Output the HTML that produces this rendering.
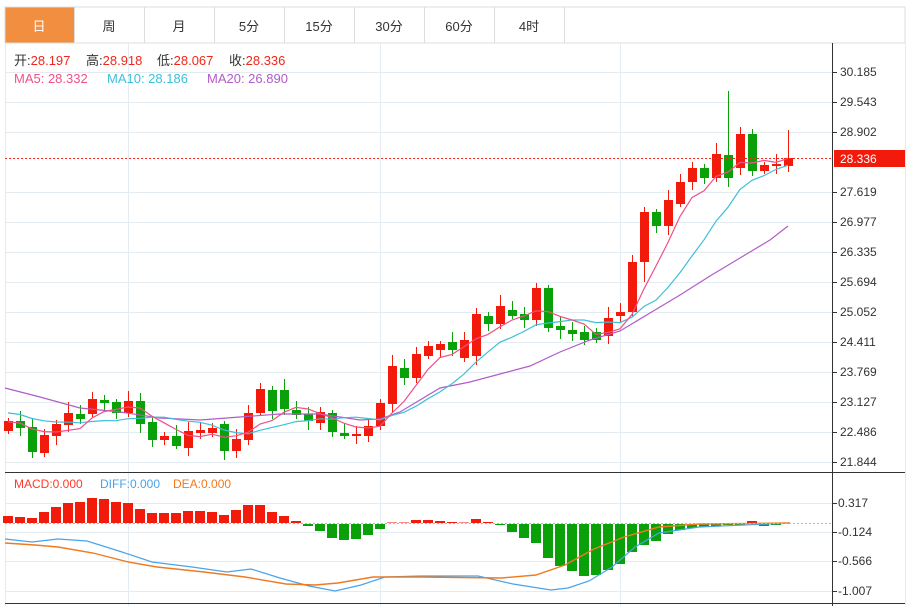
<!DOCTYPE html>
<html><head><meta charset="utf-8"><style>
body{margin:0;background:#fff;width:909px;height:606px;overflow:hidden;font-family:"Liberation Sans","Noto Sans CJK SC",sans-serif;}
svg{position:absolute;left:0;top:0}
</style></head><body>
<svg id="s" width="909" height="606" xmlns="http://www.w3.org/2000/svg" font-family="Liberation Sans, Noto Sans CJK SC, sans-serif">
<rect x="5" y="7" width="900" height="36" fill="#fff" stroke="#ddd"/>
<rect x="5.5" y="7.5" width="69" height="35" fill="#f28e3f"/>
<g stroke="#ddd"><line x1="74.5" y1="7" x2="74.5" y2="43"/><line x1="144.5" y1="7" x2="144.5" y2="43"/><line x1="214.5" y1="7" x2="214.5" y2="43"/><line x1="284.5" y1="7" x2="284.5" y2="43"/><line x1="354.5" y1="7" x2="354.5" y2="43"/><line x1="424.5" y1="7" x2="424.5" y2="43"/><line x1="494.5" y1="7" x2="494.5" y2="43"/><line x1="564.5" y1="7" x2="564.5" y2="43"/></g>
<g font-size="13" text-anchor="middle" fill="#333"><text x="39" y="31" fill="#fff">日</text><text x="109" y="31">周</text><text x="179" y="31">月</text><text x="249" y="31">5分</text><text x="319" y="31">15分</text><text x="389" y="31">30分</text><text x="459" y="31">60分</text><text x="529" y="31">4时</text></g>
<g id="grid" stroke="#e4ebf1" stroke-width="1"></g>
<g stroke="#e4ebf1"><line x1="128.5" y1="43" x2="128.5" y2="606"/><line x1="380.5" y1="43" x2="380.5" y2="606"/><line x1="620.5" y1="43" x2="620.5" y2="606"/><line x1="905.5" y1="43" x2="905.5" y2="606"/><line x1="5.5" y1="43" x2="5.5" y2="606"/></g>
<line x1="832.5" y1="43" x2="832.5" y2="606" stroke="#333"/>
<line x1="5" y1="472.5" x2="905" y2="472.5" stroke="#333"/>
<line x1="5" y1="603.5" x2="905" y2="603.5" stroke="#333"/>
<g font-size="13"><text x="14" y="65" fill="#333">开:<tspan fill="#f0271a">28.197</tspan></text><text x="86" y="65" fill="#333">高:<tspan fill="#f0271a">28.918</tspan></text><text x="157" y="65" fill="#333">低:<tspan fill="#f0271a">28.067</tspan></text><text x="229" y="65" fill="#333">收:<tspan fill="#f0271a">28.336</tspan></text>
<text x="14" y="83" fill="#f0508a">MA5: 28.332</text><text x="107" y="83" fill="#3cc0d8">MA10: 28.186</text><text x="207" y="83" fill="#b05cc8">MA20: 26.890</text></g>
<g font-size="12" fill="#ff3a2a"><text x="14" y="488">MACD:0.000</text><text x="100" y="488" fill="#4aa3e8">DIFF:0.000</text><text x="173" y="488" fill="#f07a20">DEA:0.000</text></g>
<g id="c"></g>
<line x1="5" y1="158.5" x2="832" y2="158.5" stroke="#f0271a" stroke-dasharray="2,2"/>
<rect x="834" y="150" width="71" height="17" fill="#f21a0a"/>
<text x="840" y="163" font-size="12" fill="#fff">28.336</text>
<line x1="5" y1="523.5" x2="832" y2="523.5" stroke="#8cc8dc" stroke-dasharray="2,2"/>
<g id="ax" font-size="12" fill="#333"></g>
</svg>
<script>
var NS="http://www.w3.org/2000/svg";
function el(p,t,a){var e=document.createElementNS(NS,t);for(var k in a)e.setAttribute(k,a[k]);document.getElementById(p).appendChild(e);return e;}
var labs=[[72,"30.185"],[102,"29.543"],[132,"28.902"],[192,"27.619"],[222,"26.977"],[252,"26.335"],[282,"25.694"],[312,"25.052"],[342,"24.411"],[372,"23.769"],[402,"23.127"],[432,"22.486"],[462,"21.844"]];
labs.forEach(function(l){el("grid","line",{x1:5,x2:832,y1:l[0]+.5,y2:l[0]+.5});el("grid","line",{x1:832,x2:837,y1:l[0]+.5,y2:l[0]+.5,stroke:"#333"});var t=el("ax","text",{x:840,y:l[0]+4});t.textContent=l[1];});
var ml=[[503,"0.317"],[532,"-0.124"],[561,"-0.566"],[591,"-1.007"]];
ml.forEach(function(l){el("grid","line",{x1:5,x2:832,y1:l[0]+.5,y2:l[0]+.5});el("grid","line",{x1:832,x2:837,y1:l[0]+.5,y2:l[0]+.5,stroke:"#333"});var t=el("ax","text",{x:838,y:l[0]+4});t.textContent=l[1];});
var C=[[421,431,1],[421,428,0],[427,452,0],[435,453,1],[424,436,1],[413,425,1],[414,419,0],[399,414,1],[400,403,0],[402,413,0],[401,413,1],[401,424,0],[422,440,0],[436,440,1],[436,446,0],[431,448,1],[430,433,1],[428,433,1],[424,451,0],[439,451,1],[413,440,1],[389,413,1],[390,411,0],[390,409,0],[410,415,0],[414,421,0],[412,423,1],[413,432,0],[433,436,0],[434,436,1],[426,436,1],[403,426,1],
[366,404,1],[368,378,0],[354,378,1],[346,356,1],[344,350,1],[342,350,0],[340,358,1],[314,356,1],[316,324,0],[306,324,1],[310,316,0],[314,320,0],[288,320,1],[288,328,0],[326,330,0],[330,334,0],[332,340,0],[332,340,0],[318,336,1],[312,316,1],[262,312,1],[212,262,1],[212,226,0],[200,226,1],[182,204,1],[168,182,1],[168,178,0],[154,178,1],[155,178,0],[134,168,1],[134,171,0],[165,171,1],[164,166,1],[158,166,1]];
var closes=[];
C.forEach(function(c,i){var x=8+i*12;var col=c[2]?"#f21a0a":"#0aa00a";var wt=c[0]-3-(i*7%9),wb=c[1]+3+(i*5%7);if(i==60)wt=91;if(i==65)wt=130;if(i==53)wb=282;if(i==55)wb=235;
el("c","line",{x1:x+.5,x2:x+.5,y1:wt,y2:wb,stroke:col});el("c","rect",{x:x-4,y:c[0],width:9,height:Math.max(1,c[1]-c[0]),fill:col});closes.push(c[2]?c[0]:c[1]);});
function ma(n){var p=[];for(var i=0;i<closes.length;i++){var s=0;for(var j=i-n+1;j<=i;j++)s+=(j<0?(n==5?422:412):closes[j]);p.push((8+i*12)+","+(s/n).toFixed(1));}return p.join(" ");}
el("c","polyline",{points:"5,388 40,397 80,408 120,412 160,418 200,420 240,417 280,414 320,414 360,420 380,419 400,412 440,388 470,382 500,374 530,366 560,352 590,340 620,331 650,313 680,295 710,276 740,258 770,240 788,226",fill:"none",stroke:"#b05cc8","stroke-width":1.2});
el("c","polyline",{points:ma(10),fill:"none",stroke:"#3cc0d8","stroke-width":1.2});
el("c","polyline",{points:ma(5),fill:"none",stroke:"#f0508a","stroke-width":1.2});
var M=[7,6,5,11,16,20,21,25,24,21,20,14,10,10,10,12,12,11,8,13,18,18,11,7,2,-2,-7,-14,-16,-15,-11,-5,.5,.5,3,3,2,1,.5,4,1,-1,-8,-14,-19,-34,-42,-47,-52,-51,-46,-40,-28,-21,-17,-10,-6,-4,-3,-2,-1,-1,2,-2,-1,0];
M.forEach(function(v,i){var x=8+i*12;if(v>0)el("c","rect",{x:x-5,y:523-v,width:10,height:v,fill:"#f21a0a"});else if(v<0)el("c","rect",{x:x-5,y:524,width:10,height:-v,fill:"#0aa00a"});});
el("c","polyline",{points:"5,539 32,542 58,539 87,541 122,552 152,562 192,567 227,572 251,569 280,578 309,586 335,591 361,585 385,577 420,576 478,576 513,584 551,590 568,588 589,581 612,567 635,547 659,533 699,527 790,523",fill:"none",stroke:"#4aa3e8","stroke-width":1.2});
el("c","polyline",{points:"5,543 35,545 58,547 93,553 128,562 157,567 204,572 245,577 286,584 315,585 338,583 373,577 420,577 501,578 536,575 565,565 594,549 624,537 659,527 699,524 790,523",fill:"none",stroke:"#f07a20","stroke-width":1.4});
</script>
</body></html>
